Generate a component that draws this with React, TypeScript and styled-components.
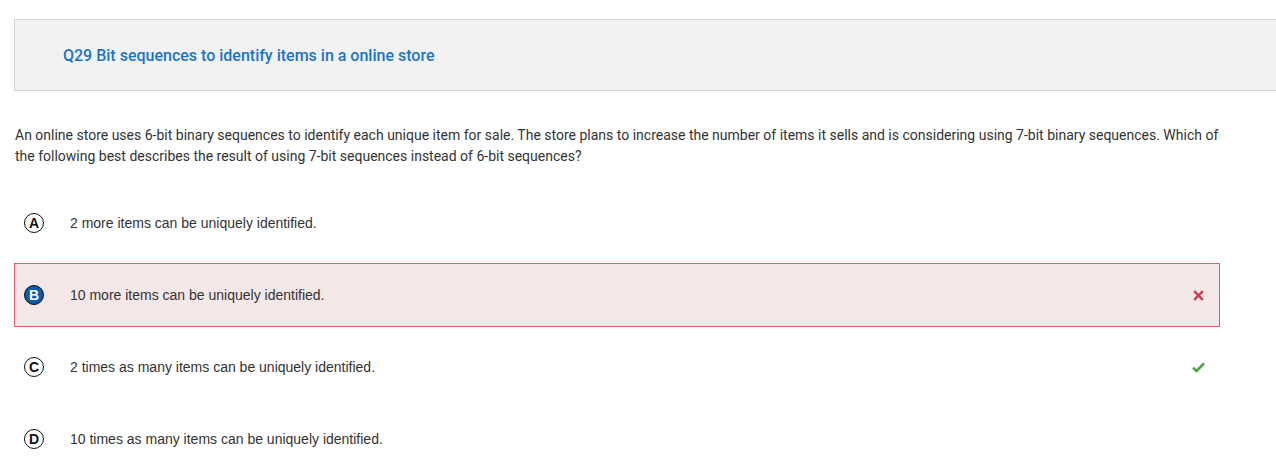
import React from "react";
import styled, { createGlobalStyle } from "styled-components";

const Global = createGlobalStyle`
  html, body { margin: 0; padding: 0; background: #fff; }
  body { font-family: Roboto, "Liberation Sans", sans-serif; }
`;

const Page = styled.div`
  padding: 19px 0 0 14px;
  overflow: hidden;
`;

const Header = styled.div`
  height: 70px;
  margin-right: -10px;
  background: #f2f2f2;
  border: 1px solid #d3d3d3;
  display: flex;
  align-items: center;
  padding-left: 48px;
`;

const Title = styled.h1`
  margin: 0;
  font-family: Roboto, sans-serif;
  font-weight: 500;
  font-size: 16px;
  color: #1a74c9;
`;

const Question = styled.p`
  margin: 34px 0 0 1px;
  width: 1215px;
  font-family: Roboto, sans-serif;
  font-size: 14px;
  line-height: 21px;
  color: #333;
`;

const Options = styled.div`
  margin-top: 24px;
  width: 1206px;
  display: flex;
  flex-direction: column;
  gap: 8px;
`;

const Row = styled.div<{ $wrong?: boolean }>`
  height: 62px;
  box-sizing: content-box;
  display: flex;
  align-items: center;
  padding: 0 14px 0 9px;
  border: 1px solid ${(p) => (p.$wrong ? "#e05a6a" : "transparent")};
  background: ${(p) => (p.$wrong ? "#f3e7e8" : "transparent")};
`;

const Letter = styled.span<{ $selected?: boolean }>`
  width: 18px;
  height: 18px;
  border-radius: 50%;
  border: 1.5px solid #111;
  display: inline-flex;
  align-items: center;
  justify-content: center;
  font-family: "Liberation Sans", Arial, sans-serif;
  font-weight: 700;
  font-size: 14px;
  color: ${(p) => (p.$selected ? "#fff" : "#111")};
  background: ${(p) => (p.$selected ? "#0b5cab" : "#fff")};
  flex: none;
`;

const Text = styled.span`
  margin-left: 26px;
  flex: 1;
  font-family: "Liberation Sans", Arial, sans-serif;
  font-size: 14px;
  color: #333;
`;

const Mark = styled.span`
  width: 13px;
  height: 12px;
  display: inline-flex;
  align-items: center;
  justify-content: center;
`;

const Cross = () => (
  <svg width="11" height="11" viewBox="0 0 11 11">
    <path d="M1.2 1.2 L9.8 9.8 M9.8 1.2 L1.2 9.8" stroke="#d23a4c" strokeWidth="2.4" />
  </svg>
);

const Check = () => (
  <svg width="13" height="11" viewBox="0 0 13 11">
    <path d="M1 5.6 L4.6 9 L12 1.4" stroke="#4aa43c" strokeWidth="2.6" fill="none" />
  </svg>
);

const options = [
  { l: "A", t: "2 more items can be uniquely identified." },
  { l: "B", t: "10 more items can be uniquely identified.", selected: true, wrong: true },
  { l: "C", t: "2 times as many items can be uniquely identified.", correct: true },
  { l: "D", t: "10 times as many items can be uniquely identified." },
];

export default function App() {
  return (
    <Page>
      <Global />
      <Header>
        <Title>Q29 Bit sequences to identify items in a online store</Title>
      </Header>
      <Question>
        An online store uses 6-bit binary sequences to identify each unique item for sale. The store plans to
        increase the number of items it sells and is considering using 7-bit binary sequences. Which of the
        following best describes the result of using 7-bit sequences instead of 6-bit sequences?
      </Question>
      <Options>
        {options.map((o) => (
          <Row key={o.l} $wrong={o.wrong}>
            <Letter $selected={o.selected}>{o.l}</Letter>
            <Text>{o.t}</Text>
            <Mark>{o.wrong ? <Cross /> : o.correct ? <Check /> : null}</Mark>
          </Row>
        ))}
      </Options>
    </Page>
  );
}
